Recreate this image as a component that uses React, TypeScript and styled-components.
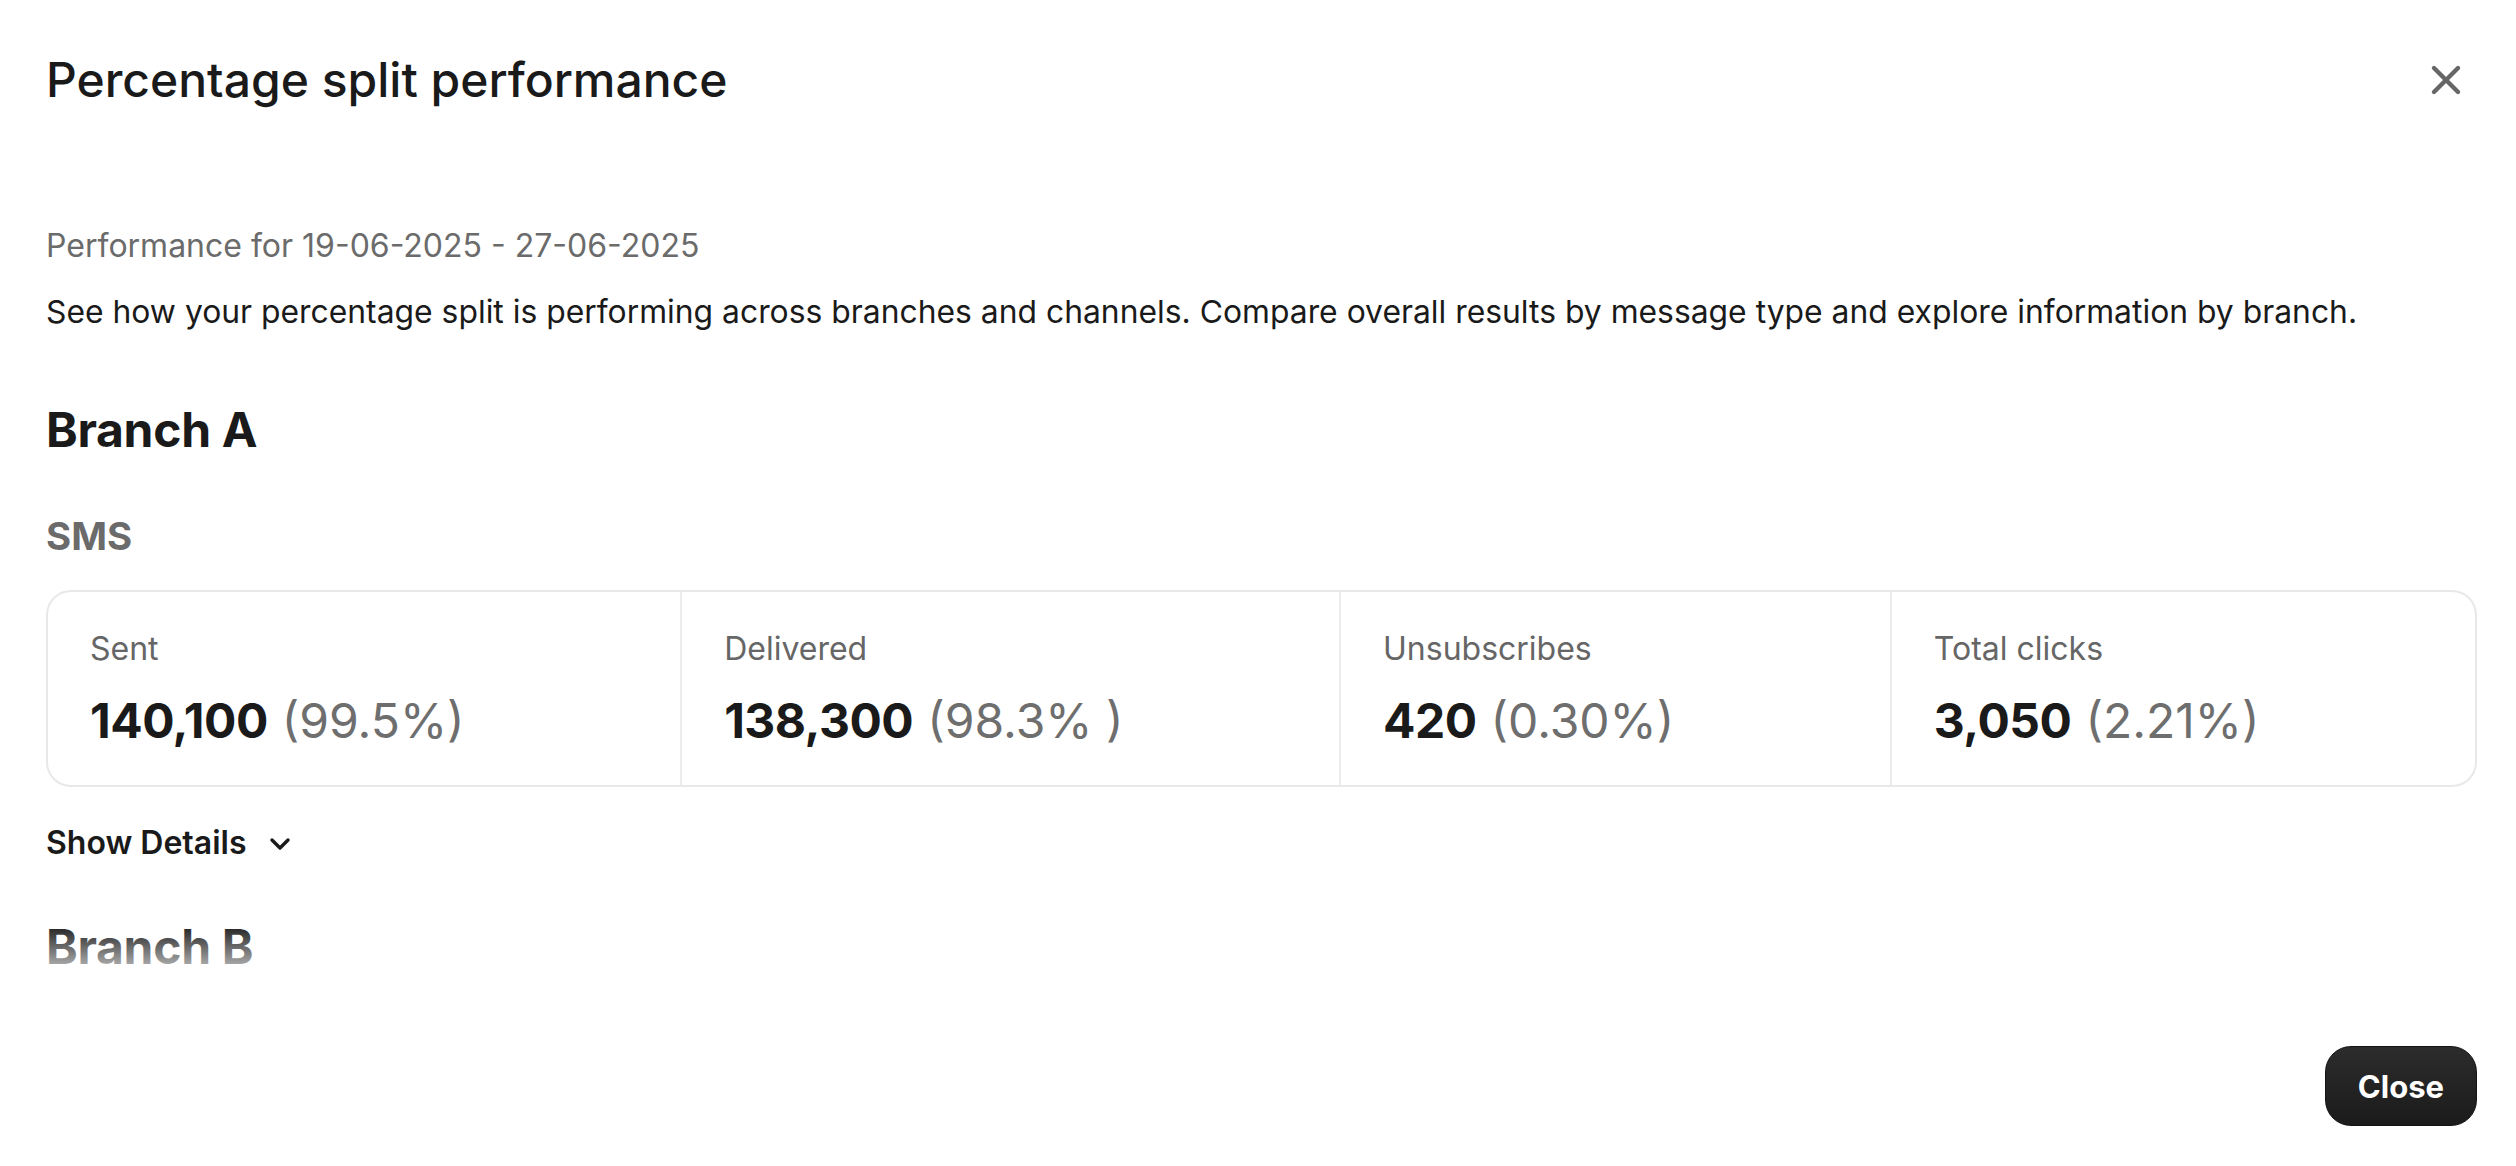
import React from "react";
import styled, { createGlobalStyle } from "styled-components";

const GlobalStyle = createGlobalStyle`
  * { box-sizing: border-box; }
  html, body {
    margin: 0;
    padding: 0;
    background: #ffffff;
    font-family: Inter, "Noto Sans", "Liberation Sans", sans-serif;
    color: #1a1a1a;
  }
`;

type Stat = { label: string; value: string; rate: string };

const branches: { name: string; channels: { name: string; stats: Stat[] }[] }[] = [
  {
    name: "Branch A",
    channels: [
      {
        name: "SMS",
        stats: [
          { label: "Sent", value: "140,100", rate: "(99.5%)" },
          { label: "Delivered", value: "138,300", rate: "(98.3% )" },
          { label: "Unsubscribes", value: "420", rate: "(0.30%)" },
          { label: "Total clicks", value: "3,050", rate: "(2.21%)" },
        ],
      },
    ],
  },
  { name: "Branch B", channels: [] },
];

const Dialog = styled.div`
  height: 100vh;
  display: flex;
  flex-direction: column;
  background: #fff;
`;

const Header = styled.header`
  flex: none;
  height: 160px;
  display: flex;
  align-items: center;
  justify-content: space-between;
  padding: 0 46px;
`;

const Title = styled.h1`
  margin: 0;
  font-size: 48px;
  font-weight: 500;
  letter-spacing: 0;
  line-height: 1.2;
  color: #1a1a1a;
`;

const IconButton = styled.button`
  width: 48px;
  height: 48px;
  display: flex;
  align-items: center;
  justify-content: center;
  border: none;
  background: transparent;
  padding: 0;
  cursor: pointer;
  color: #666666;
`;

const Body = styled.main`
  flex: 1;
  position: relative;
  overflow: hidden;
  padding: 64px 39px 0 46px;

  &::after {
    content: "";
    position: absolute;
    left: 0;
    right: 0;
    bottom: 0;
    height: 66px;
    background: linear-gradient(rgba(255, 255, 255, 0), #ffffff);
    pointer-events: none;
  }
`;

const Period = styled.p`
  margin: 0;
  font-size: 32px;
  line-height: 1.4;
  color: #6b6b6b;
`;

const Intro = styled.p`
  margin: 21px 0 0;
  font-size: 31.85px;
  line-height: 1.4;
  color: #1a1a1a;
`;

const BranchTitle = styled.h2<{ $first?: boolean }>`
  margin: ${(p) => (p.$first ? "67px" : "52px")} 0 0;
  font-size: 48px;
  font-weight: 700;
  line-height: 1.2;
  letter-spacing: -0.3px;
  color: #1a1a1a;
`;

const ChannelTitle = styled.h3`
  margin: 54px 0 0;
  font-size: 38.4px;
  font-weight: 700;
  line-height: 1.2;
  color: #6b6b6b;
`;

const StatCard = styled.div`
  margin-top: 31px;
  display: flex;
  border: 2px solid #e8e8e8;
  border-radius: 25px;
  overflow: hidden;
`;

const StatCell = styled.div`
  flex: 1 1 auto;
  padding: 35px 42px 36px;
  display: flex;
  flex-direction: column;
  gap: 20px;

  & + & {
    border-left: 2px solid #ececec;
  }
`;

const StatLabel = styled.span`
  font-size: 32px;
  line-height: 1.4;
  color: #666666;
  white-space: nowrap;
`;

const StatValue = styled.div`
  display: flex;
  align-items: baseline;
  gap: 14px;
  font-size: 48px;
  line-height: 1.2;
  white-space: nowrap;
`;

const Count = styled.span`
  font-weight: 700;
  letter-spacing: -0.5px;
  color: #1a1a1a;
`;

const Rate = styled.span`
  font-weight: 400;
  color: #6e6e6e;
`;

const DetailsToggle = styled.button`
  margin-top: 34px;
  padding: 0;
  border: none;
  background: none;
  display: flex;
  align-items: center;
  gap: 21px;
  font-family: inherit;
  font-size: 32px;
  font-weight: 600;
  line-height: 1.4;
  color: #1a1a1a;
  cursor: pointer;
`;

const Footer = styled.footer`
  flex: none;
  display: flex;
  justify-content: flex-end;
  padding: 56px 39px 40px 46px;
`;

const CloseButton = styled.button`
  height: 80px;
  padding: 0 32px;
  border: 1px solid #141414;
  border-radius: 26px;
  background: linear-gradient(#2c2c2c, #1b1b1b);
  color: #ffffff;
  font-family: inherit;
  font-size: 31px;
  font-weight: 700;
  cursor: pointer;
`;

const XIcon = () => (
  <svg width="32" height="32" viewBox="0 0 32 32" fill="none">
    <path d="M4 4L28 28M28 4L4 28" stroke="currentColor" strokeWidth="4.4" strokeLinecap="round" />
  </svg>
);

const Chevron = () => (
  <svg width="24" height="16" viewBox="0 0 24 16" fill="none">
    <path d="M4 4L12 12L20 4" stroke="currentColor" strokeWidth="3.4" strokeLinecap="round" strokeLinejoin="round" />
  </svg>
);

export default function App() {
  return (
    <>
      <GlobalStyle />
      <Dialog>
        <Header>
          <Title>Percentage split performance</Title>
          <IconButton aria-label="Close dialog">
            <XIcon />
          </IconButton>
        </Header>
        <Body>
          <Period>Performance for 19-06-2025 - 27-06-2025</Period>
          <Intro>
            See how your percentage split is performing across branches and channels. Compare overall results by
            message type and explore information by branch.
          </Intro>
          {branches.map((branch, i) => (
            <section key={branch.name}>
              <BranchTitle $first={i === 0}>{branch.name}</BranchTitle>
              {branch.channels.map((channel) => (
                <div key={channel.name}>
                  <ChannelTitle>{channel.name}</ChannelTitle>
                  <StatCard>
                    {channel.stats.map((s) => (
                      <StatCell key={s.label}>
                        <StatLabel>{s.label}</StatLabel>
                        <StatValue>
                          <Count>{s.value}</Count>
                          <Rate>{s.rate}</Rate>
                        </StatValue>
                      </StatCell>
                    ))}
                  </StatCard>
                  <DetailsToggle>
                    Show Details
                    <Chevron />
                  </DetailsToggle>
                </div>
              ))}
            </section>
          ))}
        </Body>
        <Footer>
          <CloseButton>Close</CloseButton>
        </Footer>
      </Dialog>
    </>
  );
}
